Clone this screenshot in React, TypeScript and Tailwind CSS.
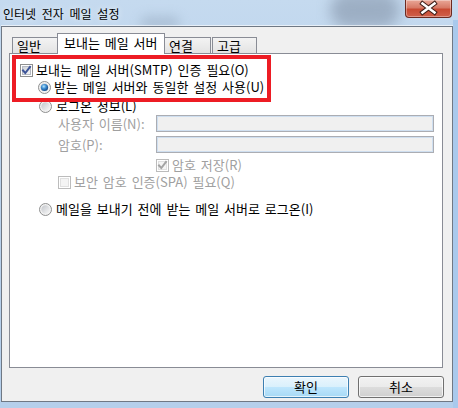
const ui = "font-['Noto_Sans_CJK_KR','Noto_Sans',sans-serif] text-[13px] leading-[16px] [word-spacing:2px]";

function CheckBox({ checked, disabled }: { checked?: boolean; disabled?: boolean }) {
  return (
    <svg width="13" height="13" viewBox="0 0 13 13" className="shrink-0">
      <defs>
        <linearGradient id="cbFill" x1="0" y1="0" x2="1" y2="1">
          <stop offset="0" stopColor="#cbcfd5" />
          <stop offset="1" stopColor="#f7f7f7" />
        </linearGradient>
      </defs>
      <rect x="0.5" y="0.5" width="12" height="12" fill="#fff" stroke={disabled ? "#bcbcbc" : "#8e8f8f"} />
      <rect
        x="2.5"
        y="2.5"
        width="8"
        height="8"
        fill={disabled ? "#f4f4f4" : "url(#cbFill)"}
        stroke={disabled ? "#e0e0e0" : "#b5b9c2"}
      />
      {checked && (
        <path
          d="M3 6.5 L5.3 9 L10 3"
          fill="none"
          stroke={disabled ? "#a3a3a3" : "#3d5498"}
          strokeWidth="2"
          strokeLinecap="square"
        />
      )}
    </svg>
  );
}

function Radio({ checked }: { checked?: boolean }) {
  return (
    <svg width="13" height="13" viewBox="0 0 13 13" className="shrink-0">
      <defs>
        <linearGradient id="rdFill" x1="0" y1="0" x2="1" y2="1">
          <stop offset="0" stopColor="#c3c6cb" />
          <stop offset="1" stopColor="#f8f8f8" />
        </linearGradient>
        <radialGradient id="rdDot" cx="0.4" cy="0.35" r="0.7">
          <stop offset="0" stopColor="#b9e6fb" />
          <stop offset="0.45" stopColor="#3d8ed3" />
          <stop offset="1" stopColor="#0f3f7c" />
        </radialGradient>
      </defs>
      <circle cx="6.5" cy="6.5" r="6" fill="#f2f2f2" stroke="#8e8f8f" />
      <circle cx="6.5" cy="6.5" r="4.2" fill="url(#rdFill)" />
      {checked && <circle cx="6.5" cy="6.5" r="3.6" fill="url(#rdDot)" />}
    </svg>
  );
}

function CloseButton() {
  return (
    <div className="mr-[6px] ml-auto h-[18px] w-[47px] overflow-hidden rounded-b-[4px] border border-t-0 border-[#6c2a20] bg-[linear-gradient(to_bottom,#e9a797_0%,#d77a66_45%,#c84a32_55%,#d0604a_100%)] shadow-[inset_0_0_0_1px_rgba(255,255,255,0.35)]">
      <svg width="45" height="17" viewBox="0 0 45 17">
        <path d="M16.5 3.5 L28.5 12.5 M28.5 3.5 L16.5 12.5" stroke="#40201a" strokeWidth="4.6" strokeLinecap="square" />
        <path d="M16.5 3.5 L28.5 12.5 M28.5 3.5 L16.5 12.5" stroke="#ffffff" strokeWidth="2.6" strokeLinecap="square" />
      </svg>
    </div>
  );
}

function Tab({ label, width, selected }: { label: string; width: string; selected?: boolean }) {
  if (selected) {
    return (
      <div
        className={`relative z-10 -mb-px h-[21px] ${width} border border-b-0 border-[#898c95] bg-white pl-[6px] pt-[1px] text-black`}
      >
        {label}
      </div>
    );
  }
  return (
    <div
      className={`h-[16px] ${width} border border-b-0 border-[#898c95] bg-[linear-gradient(to_bottom,#f3f3f3,#e3e3e3)] pl-[4px] leading-[16px] text-black`}
    >
      {label}
    </div>
  );
}

export default function App() {
  return (
    <div
      className={`relative h-[408px] w-[458px] overflow-hidden bg-[linear-gradient(to_bottom,#c5daef_0%,#bad2ec_30%,#b5cfeb_100%)] ${ui}`}
    >
      {/* blurred desktop behind the glass */}
      <div className="absolute left-[330px] top-[-8px] h-[36px] w-[70px] rounded-full bg-[#8393a8] opacity-60 blur-[7px]" />
      <div className="absolute left-[140px] top-[16px] h-[14px] w-[40px] rounded-full bg-[#8a9cb2] opacity-40 blur-[6px]" />
      <div className="absolute right-0 top-[20px] h-[388px] w-[5px] bg-[#a9c9ec]" />

      <div className="relative flex h-[26px] items-start">
        <span className="pl-[3px] pt-[7px] text-[12px] leading-[14px] text-black [word-spacing:3px] [text-shadow:0_0_6px_rgba(255,255,255,0.9)]">
          인터넷 전자 메일 설정
        </span>
        <CloseButton />
      </div>

      <div className="relative ml-[1px] flex h-[376px] w-[452px] flex-col border border-[#6f7884] bg-[#f0f0f0] shadow-[0_-1px_0_rgba(255,255,255,0.6)]">
        <div className="ml-[10px] mt-[6px] flex h-[20px] items-end">
          <Tab label="일반" width="w-[46px]" />
          <div className="-mx-[1px]">
            <Tab label="보내는 메일 서버" width="w-[108px]" selected />
          </div>
          <Tab label="연결" width="w-[47px]" />
          <div className="w-px" />
          <Tab label="고급" width="w-[45px]" />
        </div>

        <div className="relative ml-[7px] h-[315px] w-[434px] border border-[#898c95] bg-white pl-[10px] pt-[8px] text-black">
          <div className="flex h-[16px] items-center gap-[3px]">
            <CheckBox checked />
            <span className="block h-[16px]">보내는 메일 서버(SMTP) 인증 필요(O)</span>
          </div>
          <div className="mt-[1px] flex h-[16px] items-center gap-[3px] pl-[18px]">
            <Radio checked />
            <span className="block h-[16px]">받는 메일 서버와 동일한 설정 사용(U)</span>
          </div>
          <div className="mt-[3px] flex h-[16px] items-center gap-[4px] pl-[19px]">
            <Radio />
            <span className="block h-[16px]">로그온 정보(L)</span>
          </div>
          <div className="mt-[1px] flex h-[17px] items-center pl-[38px] text-[#a0a0a0]">
            <span className="w-[98px]">사용자 이름(N):</span>
            <div className="h-[17px] w-[278px] border border-[#abadb3] bg-[#f0f0f0] shadow-[inset_0_0_0_1px_#cfdff0]" />
          </div>
          <div className="mt-[4px] flex h-[17px] items-center pl-[38px] text-[#a0a0a0]">
            <span className="w-[98px]">암호(P):</span>
            <div className="h-[17px] w-[278px] border border-[#abadb3] bg-[#f0f0f0] shadow-[inset_0_0_0_1px_#cfdff0]" />
          </div>
          <div className="mt-[4px] flex h-[16px] items-center gap-[3px] pl-[136px] text-[#a0a0a0]">
            <CheckBox checked disabled />
            <span className="block h-[16px]">암호 저장(R)</span>
          </div>
          <div className="mt-[1px] flex h-[16px] items-center gap-[3px] pl-[38px] text-[#a0a0a0]">
            <CheckBox disabled />
            <span className="block h-[16px]">보안 암호 인증(SPA) 필요(Q)</span>
          </div>
          <div className="mt-[11px] flex h-[16px] items-center gap-[4px] pl-[19px]">
            <Radio />
            <span className="block h-[16px]">메일을 보내기 전에 받는 메일 서버로 로그온(I)</span>
          </div>

          {/* red annotation box */}
          <div className="pointer-events-none absolute left-[2px] top-[1px] h-[47px] w-[259px] border-[4px] border-[#ed1c24]" />
        </div>

        <div className="mr-[8px] mt-[8px] flex justify-end gap-[9px]">
          <button className="h-[22px] w-[86px] rounded-[3px] border border-[#3c7fb1] bg-[linear-gradient(to_bottom,#eaf6fd_0%,#d9f0fc_50%,#bee6fd_50%,#a7d9f5_100%)] text-black shadow-[inset_0_0_0_1px_rgba(255,255,255,0.7)]">
            확인
          </button>
          <button className="h-[22px] w-[86px] rounded-[3px] border border-[#707070] bg-[linear-gradient(to_bottom,#f2f2f2_0%,#ebebeb_50%,#dddddd_50%,#cfcfcf_100%)] text-black shadow-[inset_0_0_0_1px_rgba(255,255,255,0.7)]">
            취소
          </button>
        </div>
      </div>
    </div>
  );
}
